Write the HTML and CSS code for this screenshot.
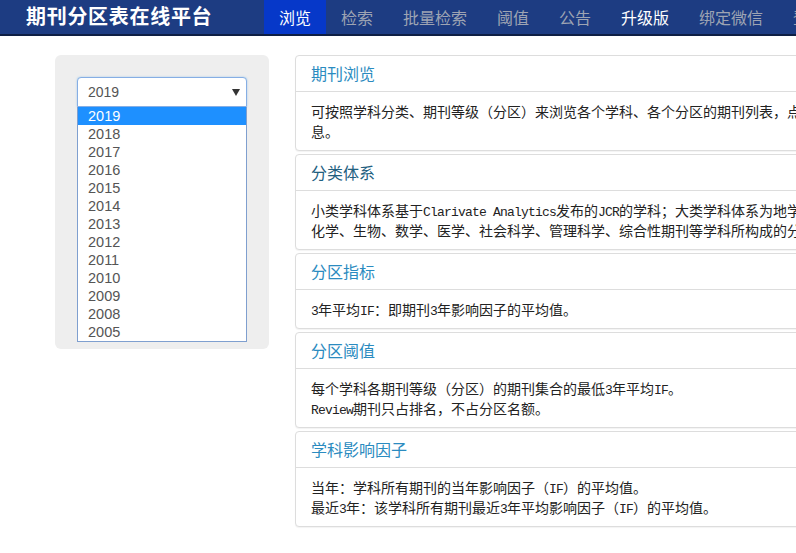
FILE: index.html
```html
<!DOCTYPE html>
<html lang="zh-CN">
<head>
<meta charset="utf-8">
<title>期刊分区表在线平台</title>
<link rel="stylesheet" href="styles.css">
</head>
<body>
<header class="navbar">
  <div class="brand">期刊分区表在线平台</div>
  <nav class="nav">
    <a class="nav-item active">浏览</a>
    <a class="nav-item">检索</a>
    <a class="nav-item">批量检索</a>
    <a class="nav-item">阈值</a>
    <a class="nav-item">公告</a>
    <a class="nav-item highlight">升级版</a>
    <a class="nav-item">绑定微信</a>
    <a class="nav-item">登录</a>
  </nav>
</header>

<main class="main">
  <aside class="sidebar">
    <div class="well">
      <div class="select">
        <span class="select-value">2019</span>
        <span class="caret"></span>
      </div>
      <ul class="options">
        <li class="option selected">2019</li>
        <li class="option">2018</li>
        <li class="option">2017</li>
        <li class="option">2016</li>
        <li class="option">2015</li>
        <li class="option">2014</li>
        <li class="option">2013</li>
        <li class="option">2012</li>
        <li class="option">2011</li>
        <li class="option">2010</li>
        <li class="option">2009</li>
        <li class="option">2008</li>
        <li class="option">2005</li>
      </ul>
    </div>
  </aside>

  <section class="content">
    <div class="panel">
      <div class="panel-heading"><h3 class="panel-title">期刊浏览</h3></div>
      <div class="panel-body">可按照学科分类、期刊等级（分区）来浏览各个学科、各个分区的期刊列表，点击期刊名称可以查看期刊的详细信<br>息。</div>
    </div>
    <div class="panel">
      <div class="panel-heading"><h3 class="panel-title dark">分类体系</h3></div>
      <div class="panel-body">小类学科体系基于<span class="en">Clarivate Analytics</span>发布的<span class="en">JCR</span>的学科；大类学科体系为地学、天文、工程技术、环境科学、农林科学、物理、<br>化学、生物、数学、医学、社会科学、管理科学、综合性期刊等学科所构成的分类体系。</div>
    </div>
    <div class="panel">
      <div class="panel-heading"><h3 class="panel-title">分区指标</h3></div>
      <div class="panel-body"><span class="en">3</span>年平均<span class="en">IF</span>：即期刊<span class="en">3</span>年影响因子的平均值。</div>
    </div>
    <div class="panel">
      <div class="panel-heading"><h3 class="panel-title">分区阈值</h3></div>
      <div class="panel-body">每个学科各期刊等级（分区）的期刊集合的最低<span class="en">3</span>年平均<span class="en">IF</span>。<br><span class="en">Review</span>期刊只占排名，不占分区名额。</div>
    </div>
    <div class="panel">
      <div class="panel-heading"><h3 class="panel-title">学科影响因子</h3></div>
      <div class="panel-body">当年：学科所有期刊的当年影响因子（<span class="en">IF</span>）的平均值。<br>最近<span class="en">3</span>年：该学科所有期刊最近<span class="en">3</span>年平均影响因子（<span class="en">IF</span>）的平均值。</div>
    </div>
  </section>
</main>
</body>
</html>
```

FILE: styles.css
```css
html, body {
  margin: 0;
  padding: 0;
  overflow: hidden;
  background: #ffffff;
}

body {
  font-family: "Noto Sans CJK SC", "Liberation Sans", sans-serif;
  color: #222;
  font-size: 14px;
}

/* ---------- navbar ---------- */
.navbar {
  display: flex;
  align-items: stretch;
  height: 34px;
  background: #1d3c82;
  border-bottom: 2px solid #0e1f44;
  white-space: nowrap;
}

.brand {
  box-sizing: border-box;
  width: 264px;
  flex: none;
  padding-left: 26px;
  color: #ffffff;
  font-weight: bold;
  font-size: 20px;
  letter-spacing: 0.7px;
  line-height: 32px;
}

.nav {
  display: flex;
  flex: none;
}

.nav-item {
  display: block;
  padding: 0 15px;
  font-size: 16px;
  line-height: 34px;
  color: #9ea4b3;
  text-decoration: none;
}

.nav-item.active {
  background: #0638c9;
  color: #ffffff;
}

.nav-item.highlight {
  color: #ffffff;
}

/* ---------- layout ---------- */
.main {
  display: flex;
  align-items: flex-start;
  gap: 26px;
  padding: 19px 0 0 55px;
}

.sidebar {
  flex: none;
  width: 214px;
}

.well {
  background: #eeeeee;
  border-radius: 6px;
  padding: 22px 22px 7px 22px;
}

.select {
  box-sizing: border-box;
  height: 30px;
  display: flex;
  align-items: center;
  justify-content: space-between;
  padding: 0 6px 0 10px;
  background: #ffffff;
  border: 1px solid #86aee4;
  border-radius: 4px 4px 0 0;
  box-shadow: 0 0 2px rgba(102, 175, 233, 0.6);
  font-family: "Liberation Sans", Arial, sans-serif;
  font-size: 14px;
  color: #555;
}

.caret {
  width: 0;
  height: 0;
  border-left: 4px solid transparent;
  border-right: 4px solid transparent;
  border-top: 7px solid #333;
}

.options {
  list-style: none;
  margin: 0;
  padding: 0;
  background: #ffffff;
  border: 1px solid #7f9fcf;
  border-top: none;
  font-family: "Liberation Sans", Arial, sans-serif;
  font-size: 14.5px;
  color: #555;
}

.option {
  height: 18px;
  line-height: 18px;
  padding-left: 10px;
}

.option.selected {
  background: #1e90ff;
  color: #ffffff;
}

/* ---------- panels ---------- */
.content {
  flex: none;
  width: 880px;
}

.panel {
  background: #ffffff;
  border: 1px solid #dddddd;
  border-radius: 4px;
  box-shadow: 0 1px 1px rgba(0, 0, 0, 0.05);
  margin-bottom: 3px;
}

.panel-heading {
  padding: 9px 15px;
  border-bottom: 1px solid #dddddd;
}

.panel-title {
  margin: 0;
  font-size: 16px;
  font-weight: normal;
  line-height: 17px;
  color: #2b8bc0;
}

.panel-title.dark {
  color: #22607f;
}

.panel-body {
  padding: 9px 15px;
  line-height: 20px;
  font-size: 14px;
  color: #222;
  white-space: nowrap;
}

.en {
  font-family: "Liberation Mono", monospace;
  font-size: 13px;
  letter-spacing: -0.8px;
  line-height: 1;
}
```
